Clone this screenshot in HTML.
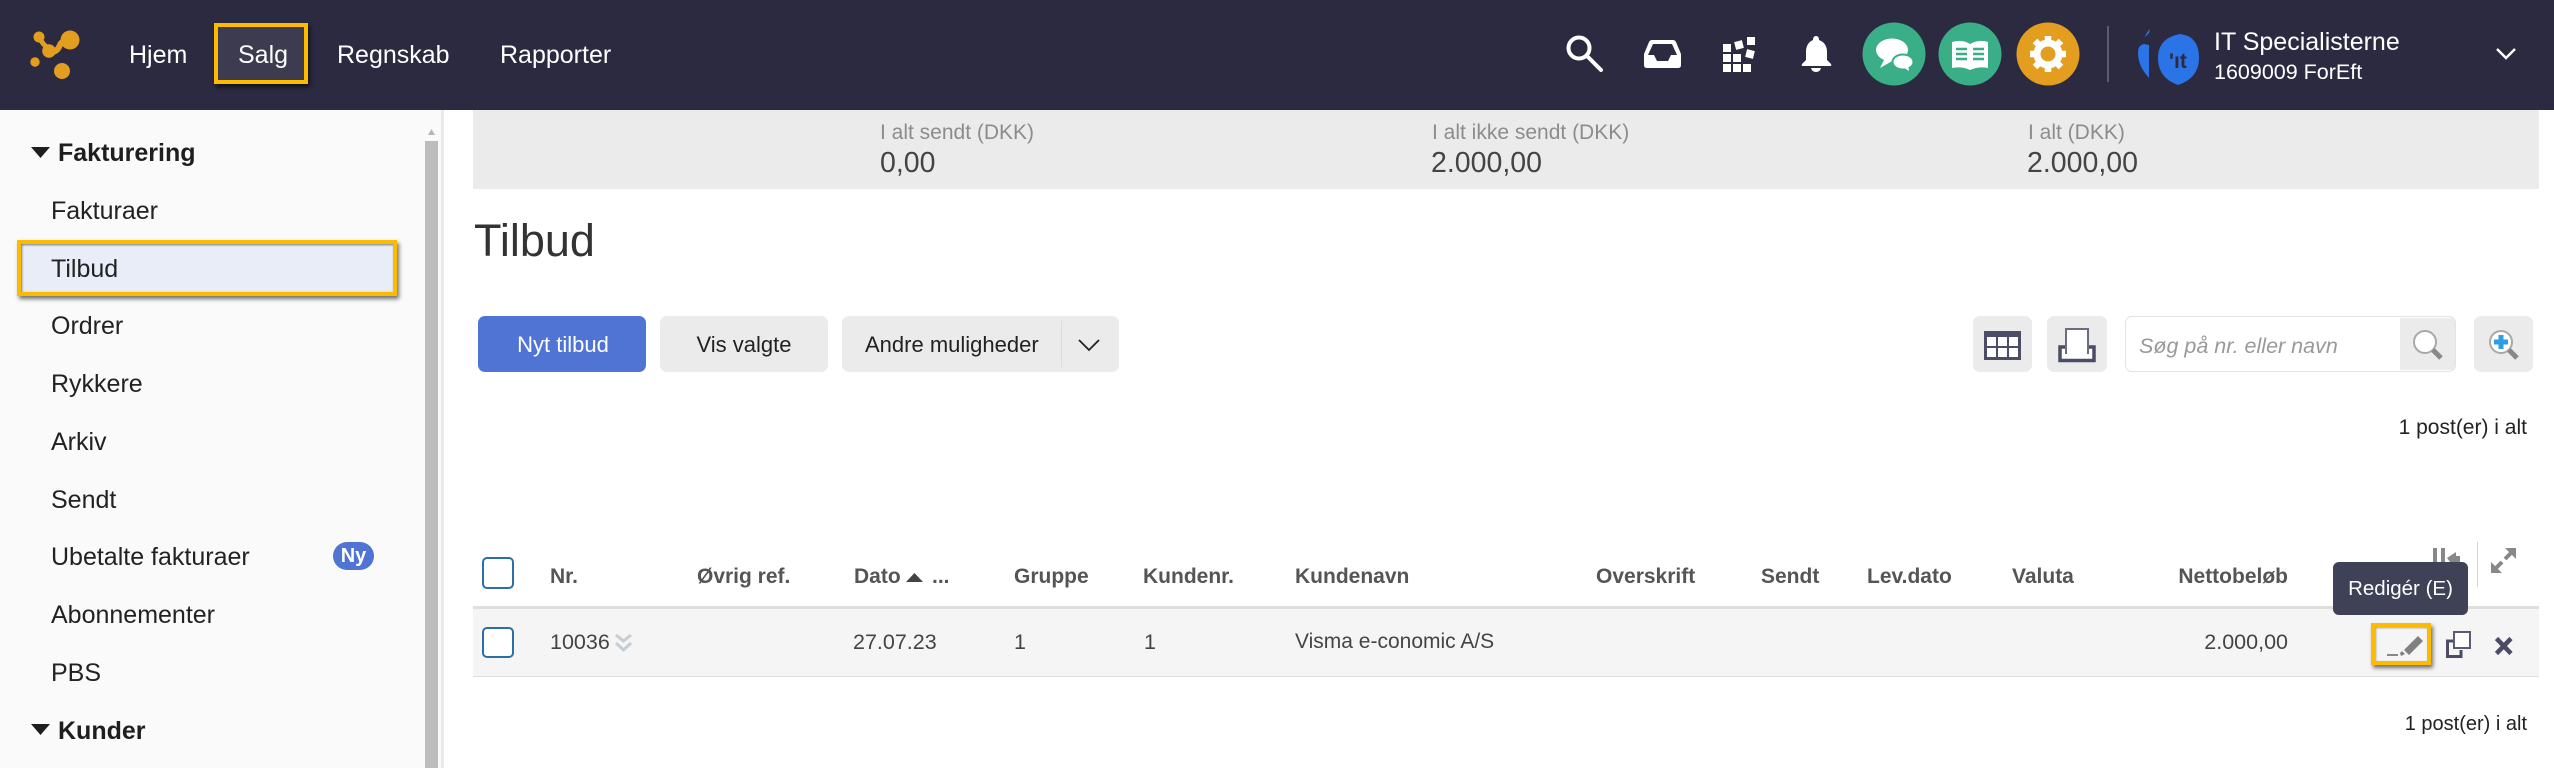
<!DOCTYPE html>
<html lang="da"><head><meta charset="utf-8"><title>Tilbud</title>
<style>
html,body{margin:0;padding:0;width:2554px;height:768px;overflow:hidden;background:#fff;font-family:"Liberation Sans",sans-serif}
.a{position:absolute}
.t{position:absolute;white-space:nowrap;line-height:30px;height:30px}
.nav{color:#fff;font-size:25px;top:40px}
.s{font-size:25px;color:#222;left:51px}
.sb{font-size:25px;font-weight:bold;color:#1e1e1e;left:58px}
.lb{font-size:21px;color:#8c8c8c;top:118px}
.val{font-size:28.5px;color:#444;top:148px}
.th{font-size:21px;font-weight:bold;color:#555;top:562px}
.td{font-size:21.5px;color:#444;top:627px}
.bt{font-size:22px}
.btn{position:absolute;background:#ebebeb;border-radius:7px;top:316px;height:56px}
.cb{position:absolute;box-sizing:border-box;left:482px;width:32px;border:2px solid #2f6ea5;border-radius:5px;background:#fff}
svg{position:absolute;overflow:visible}
</style></head><body>
<!-- header -->
<div class="a" style="left:0;top:0;width:2554px;height:110px;background:#2b2a40"></div>
<svg style="left:0;top:0" width="110" height="110"><g fill="#e39e1f"><circle cx="70" cy="40" r="9.5"/><circle cx="39" cy="37" r="5.5"/><circle cx="35" cy="62" r="4.7"/><circle cx="62" cy="71" r="8"/><circle cx="49" cy="51" r="6.8"/></g><g fill="none" stroke="#e39e1f" stroke-linecap="round"><path d="M39 37Q43 45 49 49" stroke-width="5"/><path d="M49 52Q57 53 60 45Q62 40 70 40" stroke-width="6"/></g></svg>
<div class="t nav" style="left:129px">Hjem</div>
<div class="a" style="left:214px;top:23px;width:86px;height:53px;border:4px solid #fdbb00;background:#3c3b50;box-shadow:2px 3px 4px rgba(0,0,0,.6)"></div>
<div class="t nav" style="left:238px">Salg</div>
<div class="t nav" style="left:337px">Regnskab</div>
<div class="t nav" style="left:500px">Rapporter</div>

<svg style="left:0;top:0" width="2554" height="110">
<g fill="none" stroke="#fff" stroke-width="4" stroke-linecap="round"><circle cx="1579" cy="48" r="10.5"/><path d="M1588 57L1601 70"/></g>
<path fill="#fff" fill-rule="evenodd" d="M1652 40H1673Q1675 40 1676 42L1681 54V65Q1681 68 1678 68H1647Q1644 68 1644 65V54L1649 42Q1650 40 1652 40ZM1653 44L1648 55H1654L1657 61H1668L1671 55H1677L1672 44Z"/>
<g fill="#fff"><rect x="1723" y="44" width="8" height="8"/><rect x="1723" y="54" width="8" height="8"/><rect x="1723" y="64" width="8" height="8"/><rect x="1733" y="54" width="8" height="8"/><rect x="1733" y="64" width="8" height="8"/><rect x="1743" y="64" width="8" height="8"/><rect x="1735" y="41" width="8" height="8" transform="rotate(-14 1739 45)"/><rect x="1747" y="37" width="8" height="8"/><rect x="1746" y="50" width="8" height="8" transform="rotate(14 1750 54)"/>
<path d="M1816 36Q1819 36 1819 40Q1827 43 1827 52V60L1831 64Q1832 66 1830 66H1803Q1801 66 1802 64L1806 60V52Q1806 43 1813 40Q1813 36 1816 36ZM1811 68H1821Q1820 72 1816 72Q1812 72 1811 68Z"/></g>
<circle cx="1894" cy="54" r="31.5" fill="#3aae86"/><circle cx="1970" cy="54" r="31.5" fill="#3aae86"/><circle cx="2048" cy="54" r="31.5" fill="#e39e1f"/>
<g fill="#fff"><ellipse cx="1892" cy="50" rx="16" ry="11.5"/><path d="M1885 58L1880 68L1894 60Z"/><ellipse cx="1903" cy="62" rx="10.5" ry="7.5" stroke="#3aae86" stroke-width="2"/><path d="M1903 67L1909 71L1908 64Z"/></g>
<path fill="#fff" d="M1952 42Q1962 39 1970 44V70Q1962 66 1952 68ZM1970 44Q1979 39 1988 42V68Q1979 66 1970 70Z"/>
<path stroke="#3aae86" stroke-width="2.4" fill="none" d="M1956 49H1967M1956 54H1967M1956 59H1967M1973 49H1984M1973 54H1984M1973 59H1984"/>
<circle cx="2048" cy="54" r="11" fill="none" stroke="#fff" stroke-width="7"/>
<g stroke="#fff" stroke-width="6.5"><path d="M2048 36V42M2048 66V72M2030 54H2036M2060 54H2066M2035 41L2039 45M2057 63L2061 67M2035 67L2039 63M2057 45L2061 41"/></g>
<rect x="2107" y="26" width="2" height="56" fill="#5d5c70"/>
<path fill="#2b74e8" d="M2150 29L2149 33L2145 37Q2146 33 2150 29ZM2149 45V78Q2138 66 2138 53Q2138 45 2144 44Z"/>
<path fill="#2b74e8" d="M2180 34Q2199 36 2199 58Q2199 78 2178 85Q2158 78 2158 58Q2158 38 2180 34Z"/>
<path d="M2497 49L2506 58L2515 49" fill="none" stroke="#fff" stroke-width="2.4"/>
</svg>
<div class="t" style="left:2169px;top:49px;font-size:21px;font-weight:bold;color:#2b2a40;line-height:26px;height:26px">'ıt</div>
<div class="t" style="left:2214px;top:27px;color:#fff;font-size:25px">IT Specialisterne</div>
<div class="t" style="left:2214px;top:57px;color:#fff;font-size:21.5px">1609009 ForEft</div>

<!-- sidebar -->
<div class="a" style="left:0;top:110px;width:441px;height:658px;background:#fafafa"></div>
<div class="a" style="left:441px;top:110px;width:3px;height:658px;background:#e9e9e9"></div>
<div class="a" style="left:425px;top:141px;width:13px;height:627px;background:#bdbdbd"></div>
<svg style="left:428px;top:129px" width="8" height="6"><path d="M0 6L3.5 0L7 6Z" fill="#b5b5b5"/></svg>
<svg style="left:31px;top:147px" width="20" height="12"><path d="M0 0H19L9.5 11Z" fill="#1e1e1e"/></svg>
<svg style="left:31px;top:724px" width="20" height="12"><path d="M0 0H19L9.5 11Z" fill="#1e1e1e"/></svg>
<div class="t sb" style="top:138px">Fakturering</div>
<div class="t s" style="top:196px">Fakturaer</div>
<div class="a" style="left:17px;top:240px;width:372px;height:48px;border:4px solid #fdbb00;background:#e8edf7;box-shadow:2px 3px 4px rgba(0,0,0,.55), inset 1px 1px 2px rgba(0,0,0,.5)"></div>
<div class="t s" style="top:254px;left:51px">Tilbud</div>
<div class="t s" style="top:311px">Ordrer</div>
<div class="t s" style="top:369px">Rykkere</div>
<div class="t s" style="top:427px">Arkiv</div>
<div class="t s" style="top:485px">Sendt</div>
<div class="t s" style="top:542px">Ubetalte fakturaer</div>
<div class="a" style="left:333px;top:542px;width:41px;height:28px;border-radius:14px;background:#4f74d4;color:#fff;font-weight:bold;font-size:20px;line-height:28px;text-align:center">Ny</div>
<div class="t s" style="top:600px">Abonnementer</div>
<div class="t s" style="top:658px">PBS</div>
<div class="t sb" style="top:716px">Kunder</div>

<!-- stats -->
<div class="a" style="left:473px;top:110px;width:2066px;height:79px;background:#ebebeb"></div>
<div class="t lb" style="left:880px">I alt sendt (DKK)</div><div class="t val" style="left:880px">0,00</div>
<div class="t lb" style="left:1432px">I alt ikke sendt (DKK)</div><div class="t val" style="left:1431px">2.000,00</div>
<div class="t lb" style="left:2028px">I alt (DKK)</div><div class="t val" style="left:2027px">2.000,00</div>
<div class="t" style="left:474px;top:216px;font-size:45px;color:#333;line-height:50px;height:50px">Tilbud</div>

<!-- toolbar -->
<div class="btn" style="left:478px;width:168px;background:#4f74d4"></div>
<div class="t bt" style="left:479px;width:168px;top:330px;text-align:center;color:#fff">Nyt tilbud</div>
<div class="btn" style="left:660px;width:168px"></div>
<div class="t bt" style="left:660px;width:168px;top:330px;text-align:center;color:#222">Vis valgte</div>
<div class="btn" style="left:842px;width:277px"></div>
<div class="t bt" style="left:865px;top:330px;color:#222">Andre muligheder</div>
<div class="a" style="left:1061px;top:321px;width:1px;height:46px;background:#dcdcdc"></div>
<svg style="left:1078px;top:339px" width="24" height="13"><path d="M1 1L11 11L21 1" fill="none" stroke="#222" stroke-width="1.8"/></svg>
<div class="btn" style="left:1973px;width:59px"></div>
<div class="btn" style="left:2047px;width:60px"></div>
<svg style="left:0;top:0" width="2554" height="400">
<rect x="1984" y="331" width="37" height="29" fill="#4b4d66"/><g fill="#fff"><rect x="1987" y="337" width="9" height="9"/><rect x="1998" y="337" width="9" height="9"/><rect x="2009" y="337" width="9" height="9"/><rect x="1987" y="348" width="9" height="9"/><rect x="1998" y="348" width="9" height="9"/><rect x="2009" y="348" width="9" height="9"/></g>
<rect x="2060" y="347" width="34" height="13.5" fill="#fff" stroke="#4b4d66" stroke-width="3.5"/>
<path d="M2066 354V329H2088V354Z" fill="#fff"/><path d="M2066 354V329H2088V354" fill="none" stroke="#6a6c80" stroke-width="2"/>
</svg>
<div class="a" style="left:2125px;top:316px;width:329px;height:54px;border:1px solid #e3e3e3;border-radius:7px;background:#fff"></div>
<div class="a" style="left:2400px;top:318px;width:55px;height:52px;background:#ebebeb"></div>
<div class="t" style="left:2139px;top:331px;color:#999;font-size:21.5px;font-style:italic">Søg på nr. eller navn</div>
<div class="btn" style="left:2474px;width:59px"></div>
<svg style="left:0;top:0" width="2554" height="400">
<circle cx="2425" cy="342" r="11" fill="#fff" stroke="#a8a8a8" stroke-width="2"/><path d="M2433 350L2441 358" stroke="#888" stroke-width="5"/>
<circle cx="2501" cy="342" r="11" fill="#fff" stroke="#a8a8a8" stroke-width="2"/><path d="M2509 350L2517 358" stroke="#888" stroke-width="5"/>
<path d="M2501 335V349M2494 342H2508" stroke="#2f9de4" stroke-width="5"/>
</svg>
<div class="t" style="right:27px;top:413px;color:#222;font-size:21px">1 post(er) i alt</div>

<!-- table -->
<div class="a" style="left:473px;top:606px;width:2066px;height:3px;background:#dedede"></div>
<div class="a" style="left:473px;top:609px;width:2066px;height:67px;background:#f5f5f5"></div>
<div class="a" style="left:473px;top:676px;width:2066px;height:1px;background:#dedede"></div>
<div class="cb" style="top:557px;height:32px"></div>
<div class="cb" style="top:627px;height:31px"></div>
<div class="t th" style="left:550px">Nr.</div>
<div class="t th" style="left:697px">Øvrig ref.</div>
<div class="t th" style="left:854px">Dato</div>
<svg style="left:906px;top:573px" width="18" height="10"><path d="M0 9L8.5 0L17 9Z" fill="#444"/></svg>
<div class="t th" style="left:932px">...</div>
<div class="t th" style="left:1014px">Gruppe</div>
<div class="t th" style="left:1143px">Kundenr.</div>
<div class="t th" style="left:1295px">Kundenavn</div>
<div class="t th" style="left:1596px">Overskrift</div>
<div class="t th" style="left:1761px">Sendt</div>
<div class="t th" style="left:1867px">Lev.dato</div>
<div class="t th" style="left:2012px">Valuta</div>
<div class="t th" style="right:266px">Nettobeløb</div>
<div class="t td" style="left:550px">10036</div>
<svg style="left:615px;top:634px" width="18" height="19"><path d="M1 1L8.5 7L16 1M1 9L8.5 16L16 9" fill="none" stroke="#c6ced4" stroke-width="3"/></svg>
<div class="t td" style="left:853px">27.07.23</div>
<div class="t td" style="left:1014px">1</div>
<div class="t td" style="left:1144px">1</div>
<div class="t td" style="left:1295px;font-size:21px">Visma e-conomic A/S</div>
<div class="t td" style="right:266px">2.000,00</div>
<!-- table icons -->
<svg style="left:0;top:0" width="2554" height="768">
<path d="M2433 548H2437V565H2433ZM2441 548H2445V565H2441ZM2447 558L2456 552V556H2460V562H2450Z" fill="#888"/>
<rect x="2477" y="542" width="1" height="45" fill="#d5d5d5"/>
<path d="M2516 548V559L2505 548ZM2491 573V562L2502 573Z" fill="#888"/>
<path d="M2511 553L2505 559M2496 568L2502 562" stroke="#888" stroke-width="4"/>
</svg>
<div class="a" style="left:2333px;top:562px;width:135px;height:53px;border-radius:6px;background:#3f4156;color:#fff;font-size:20.5px;line-height:53px;text-align:center">Redigér (E)</div>
<div class="a" style="left:2371px;top:623px;width:52px;height:34px;border:4px solid #fdbb00;background:#f5f5f5;box-shadow:2px 3px 4px rgba(0,0,0,.55), inset 1px 1px 2px rgba(0,0,0,.35)"></div>
<svg style="left:0;top:0" width="2554" height="768">
<rect x="2387" y="654" width="11" height="2" fill="#888"/>
<path d="M2400 653L2402 651L2405 654L2401 656ZM2404 650L2418 636L2423 641L2409 655Z" fill="#808080"/>
<path d="M2455 641H2447.5V656.5H2461V650" fill="none" stroke="#4b4d66" stroke-width="3"/>
<rect x="2454" y="632" width="16" height="16" fill="#fff" stroke="#5a5c72" stroke-width="2"/>
<path d="M2496.5 638.5L2511 653.5M2511 638.5L2496.5 653.5" stroke="#4b4d66" stroke-width="4.5"/>
</svg>
<div class="t" style="right:27px;top:709px;color:#222;font-size:20px">1 post(er) i alt</div>
</body></html>
